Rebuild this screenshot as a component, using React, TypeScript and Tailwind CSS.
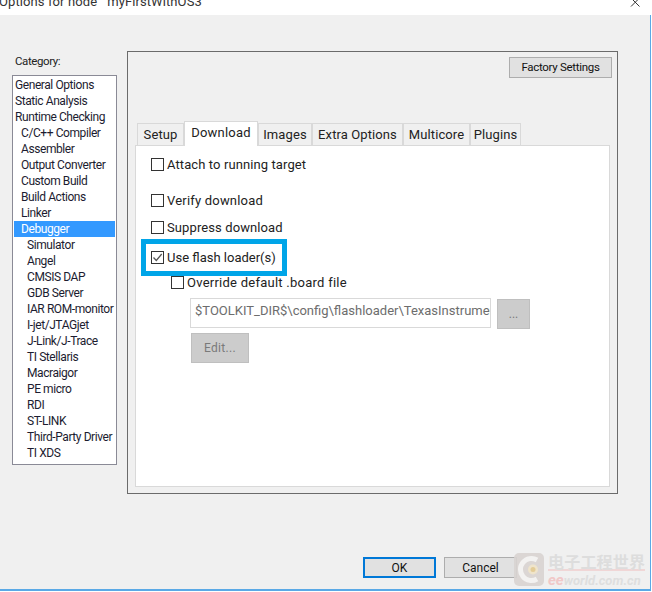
const font = "font-['Roboto','Noto_Sans',sans-serif]";

const categories: [string, number][] = [
  ["General Options", 0], ["Static Analysis", 0], ["Runtime Checking", 0],
  ["C/C++ Compiler", 1], ["Assembler", 1], ["Output Converter", 1], ["Custom Build", 1],
  ["Build Actions", 1], ["Linker", 1], ["Debugger", 1], ["Simulator", 2], ["Angel", 2],
  ["CMSIS DAP", 2], ["GDB Server", 2], ["IAR ROM-monitor", 2], ["I-jet/JTAGjet", 2],
  ["J-Link/J-Trace", 2], ["TI Stellaris", 2], ["Macraigor", 2], ["PE micro", 2],
  ["RDI", 2], ["ST-LINK", 2], ["Third-Party Driver", 2], ["TI XDS", 2],
];

function Box({ checked = false }: { checked?: boolean }) {
  return (
    <span className="w-[13px] h-[13px] shrink-0 border border-[#333] bg-white flex items-center justify-center">
      {checked && (
        <svg width="11" height="11" viewBox="0 0 11 11" fill="none" stroke="#555" strokeWidth="1.3">
          <path d="M1.5 5.5 L4.3 8.5 L9.7 2" />
        </svg>
      )}
    </span>
  );
}

function Check({ label, checked, className, labelClass = "tracking-[0.1px]" }: { label: string; checked?: boolean; className: string; labelClass?: string }) {
  return (
    <div className={`flex items-center gap-[3px] h-[13px] text-[13px] text-[#222] ${className}`}>
      <Box checked={checked} />
      <span className={labelClass}>{label}</span>
    </div>
  );
}

export default function App() {
  const tabs = [
    ["Setup", "w-[47px]"], ["Images", "w-[54px]"], ["Extra Options", "w-[91px]"],
    ["Multicore", "w-[67px]"], ["Plugins", "w-[51px]"],
  ];
  const tab = "h-[22px] border border-b-0 border-[#d9d9d9] bg-[#f0f0f0] flex items-center justify-center text-[13px] tracking-[0.1px] text-[#222]";
  return (
    <div className={`relative w-[652px] h-[592px] overflow-hidden bg-white ${font}`}>
      <div className="h-[15px] overflow-hidden relative">
        <div className="-mt-[7px] -ml-[1px] text-[13px] tracking-[0.1px] leading-[18px] whitespace-pre text-[#333]">
          Options for node   myFirstWithOS3
        </div>
        <svg className="absolute left-[630px] top-0" width="11" height="8" viewBox="0 0 11 8" fill="none" stroke="#333" strokeWidth="1">
          <path d="M1 -2 L9.5 6.5 M9.5 -2 L1 6.5" />
        </svg>
      </div>
      <div className="relative w-[651px] h-[576px] bg-[#f0f0f0] border-r border-b-2 border-[#5aa9e6] flex flex-col">
        <div className="flex pl-3 pt-[36px]">
          <div className="w-[105px] shrink-0">
            <div className="h-[24px] pt-[2px] pl-[3px] text-[11.5px] tracking-[-0.4px] leading-[16px] text-[#222]">Category:</div>
            <div className="h-[390px] border border-[#8a8a96] bg-white py-[1px] px-[1px] text-[12px] tracking-[-0.42px] leading-[16px] text-[#1c1c30]">
              {categories.map(([name, level]) => {
                const sel = name === "Debugger";
                const pad = level === 0 ? "pl-[1px]" : level === 1 ? "pl-[7px]" : "pl-[13px]";
                return (
                  <div key={name} className={`h-[16px] whitespace-nowrap ${pad} ${sel ? "bg-[#3399ff] text-white" : ""}`}>
                    {name}
                  </div>
                );
              })}
            </div>
          </div>
          <div className="ml-[10px] w-[491px] h-[443px] border border-[#6b6b6b] flex flex-col pl-[7px] pr-[7px]">
            <div className="flex justify-end pt-[5px] -mr-[2px]">
              <button className="w-[103px] h-[21px] bg-[#e1e1e1] border border-[#adadad] text-[11.5px] tracking-[-0.3px] text-[#111]">Factory Settings</button>
            </div>
            <div className="flex items-end h-[25px] mt-[42px] pl-[2px]">
              <div className={`${tab} ${tabs[0][1]}`}>{tabs[0][0]}</div>
              <div className="relative z-10 -mb-[1px] w-[74px] h-[25px] border border-b-0 border-[#d9d9d9] bg-white flex justify-center pt-[1px] text-[13px] tracking-[0.2px] text-[#222]">Download</div>
              {tabs.slice(1).map(([t, w]) => (
                <div key={t} className={`${tab} ${w}`}>{t}</div>
              ))}
            </div>
            <div className="relative w-[475px] h-[342px] bg-white border border-[#d9d9d9] flex flex-col">
              <Check className="ml-[15px] mt-[12px]" label="Attach to running target" />
              <Check className="ml-[15px] mt-[23px]" label="Verify download" labelClass="tracking-[0.2px]" />
              <Check className="ml-[15px] mt-[14px]" label="Suppress download" />
              <Check className="ml-[15px] mt-[17px]" label="Use flash loader(s)" labelClass="tracking-[0px]" checked />
              <Check className="ml-[35px] mt-[12px]" label="Override default .board file" labelClass="tracking-[0.25px]" />
              <div className="flex ml-[54px] mt-[9px]">
                <div className="w-[301px] h-[30px] border border-[#d9d9d9] bg-white overflow-hidden flex items-center pl-[4px] pb-[5px] text-[13px] whitespace-nowrap text-[#6d6d6d]">
                  <span className="w-[295px] overflow-hidden">$TOOLKIT_DIR$\config\flashloader\TexasInstruments</span>
                </div>
                <button className="ml-[6px] mt-[1px] w-[33px] h-[30px] bg-[#cccccc] border border-[#bfbfbf] text-[12px] text-[#7a7a7a]">...</button>
              </div>
              <button className="ml-[55px] mt-[4px] w-[58px] h-[30px] bg-[#cccccc] border border-[#bfbfbf] text-[12px] tracking-[0.3px] text-[#7a7a7a]">Edit...</button>
              <div className="absolute left-[5px] top-[93px] w-[146px] h-[37px] border-[5px] border-[#00a5e8]"></div>
            </div>
          </div>
        </div>
        <div className="flex pl-[363px] gap-[8px] mt-[63px]">
          <button className="w-[73px] h-[21px] bg-[#e1e1e1] border-2 border-[#0078d7] text-[12px] text-[#111]">OK</button>
          <button className="w-[73px] h-[21px] bg-[#e1e1e1] border border-[#adadad] text-[12px] text-[#111]">Cancel</button>
        </div>
        <div className="absolute left-[513px] top-[537px] w-[137px] h-[36px] flex opacity-90">
          <svg width="32" height="35" viewBox="0 0 32 35" className="shrink-0">
            <rect x="1" y="1" width="30" height="33" rx="5" fill="#d9d4d2" />
            <path d="M24 8 A11 11 0 1 0 24 27" fill="none" stroke="#f4f3f2" strokeWidth="5" />
            <circle cx="20" cy="17.5" r="5" fill="#efe3c8" />
            <circle cx="20" cy="17.5" r="2.5" fill="#e2c98e" />
          </svg>
          <div className="ml-[3px] flex flex-col">
            <div className="h-[19px] text-[16px] leading-[18px] font-bold tracking-[0.2px] text-[#dcdcdc] border-b-2 border-[#f0d4d4] whitespace-nowrap font-['Noto_Sans_CJK_SC',sans-serif]">电子工程世界</div>
            <div className="text-[13px] leading-[16px] mt-[1px] italic font-bold whitespace-nowrap text-[#dddddd]">
              <span className="text-[#f2c4c4] text-[15px]">ee</span>world.com.cn
            </div>
          </div>
        </div>
      </div>
    </div>
  );
}
